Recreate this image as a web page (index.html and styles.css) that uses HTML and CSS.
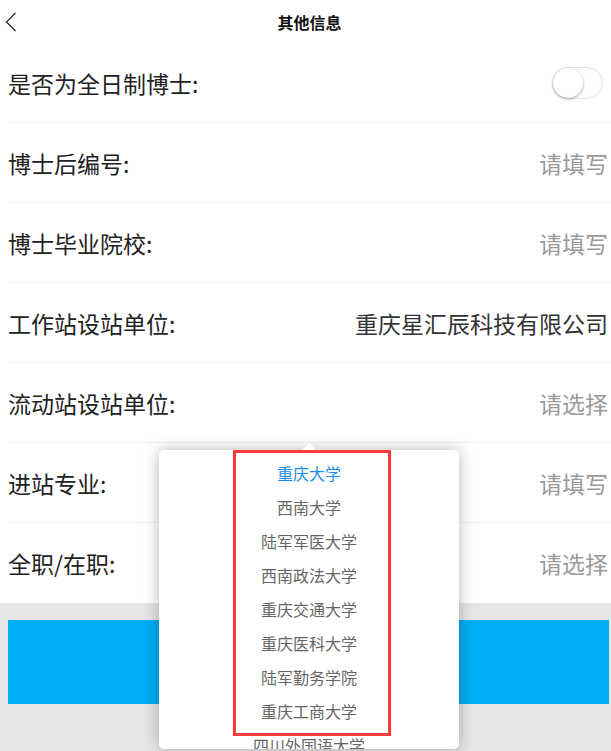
FILE: index.html
```html
<!DOCTYPE html>
<html lang="zh-CN">
    <head>
        <meta charset="utf-8">
        <title>其他信息</title>
        <meta name="viewport" content="width=device-width, initial-scale=1">
        <link rel="stylesheet" href="styles.css">
    </head>

    <body>
        <header class="navbar">
            <span class="back">
                <svg width="12" height="20" viewBox="0 0 12 20"><path d="M10.5 1 L1.5 10 L10.5 19" fill="none" stroke="#333" stroke-width="1.4"/></svg>
            </span>
            <h1 class="title">其他信息</h1>
        </header>

        <div class="form">
            <div class="row">
                <span class="label">是否为全日制博士:</span>
                <span class="switch"><span class="knob"></span></span>
            </div>
            <div class="row">
                <span class="label">博士后编号:</span>
                <span class="value placeholder">请填写</span>
            </div>
            <div class="row">
                <span class="label">博士毕业院校:</span>
                <span class="value placeholder">请填写</span>
            </div>
            <div class="row">
                <span class="label">工作站设站单位:</span>
                <span class="value">重庆星汇辰科技有限公司</span>
            </div>
            <div class="row">
                <span class="label">流动站设站单位:</span>
                <span class="value placeholder">请选择</span>
            </div>
            <div class="row">
                <span class="label">进站专业:</span>
                <span class="value placeholder">请填写</span>
            </div>
            <div class="row last">
                <span class="label">全职/在职:</span>
                <span class="value placeholder">请选择</span>
            </div>
        </div>

        <div class="footer">
            <button class="submit"></button>
        </div>

        <!-- school picker popover -->
        <div class="popover">
            <span class="arrow"></span>
            <ul class="options">
                <li class="active">重庆大学</li>
                <li>西南大学</li>
                <li>陆军军医大学</li>
                <li>西南政法大学</li>
                <li>重庆交通大学</li>
                <li>重庆医科大学</li>
                <li>陆军勤务学院</li>
                <li>重庆工商大学</li>
                <li>四川外国语大学</li>
            </ul>
            <div class="highlight"></div>
        </div>
    </body>
</html>
```

FILE: styles.css
```css
body {
    margin: 0;
    background-color: #fff;
    font-family: "Noto Sans CJK SC", "Noto Sans", sans-serif;
    color: #222;
    position: relative;
    overflow: hidden;
    height: 751px;
}

.navbar {
    height: 43px;
    display: flex;
    align-items: center;
    justify-content: center;
    position: relative;
}

.back {
    position: absolute;
    left: 5px;
    top: 12px;
}

.title {
    margin: 0;
    font-size: 16px;
    font-weight: bold;
    color: #111;
    padding-left: 8px;
}

.form {
    padding-left: 8px;
}

.row {
    height: 79px;
    border-bottom: 1px solid #f0f0f0;
    display: flex;
    align-items: center;
    justify-content: space-between;
    padding-right: 3px;
}

.row.last {
    border-bottom: none;
    height: 80px;
}

.label {
    font-size: 23px;
    color: #222;
}

.value {
    font-size: 23px;
    color: #333;
}

.placeholder {
    color: #999;
}

.switch {
    width: 49px;
    height: 30px;
    border: 1px solid #e3e3e3;
    border-radius: 16px;
    background-color: #fdfdfd;
    margin-right: 5px;
    position: relative;
}

.knob {
    position: absolute;
    left: 0;
    top: 0;
    width: 30px;
    height: 30px;
    border-radius: 50%;
    background-color: #fff;
    box-shadow: 0 1px 3px rgba(0, 0, 0, 0.35);
}

.footer {
    height: 148px;
    background-color: #e6e6e6;
    padding: 17px 2px 0 8px;
    box-sizing: border-box;
}

.submit {
    display: block;
    width: 100%;
    height: 84px;
    border: none;
    background-color: #00aef5;
}

.popover {
    position: absolute;
    left: 159px;
    top: 450px;
    width: 300px;
    height: 299px;
    background-color: #fff;
    border-radius: 5px;
    box-shadow: 0 0 16px rgba(0, 0, 0, 0.28);
}

.arrow {
    position: absolute;
    left: 143px;
    top: -7px;
    width: 0;
    height: 0;
    border-left: 7px solid transparent;
    border-right: 7px solid transparent;
    border-bottom: 7px solid #fff;
}

.options {
    list-style: none;
    margin: 0;
    padding: 6px 0 0 0;
    height: 293px;
    overflow: hidden;
    border-radius: 0 0 5px 5px;
}

.options li {
    height: 34px;
    line-height: 34px;
    text-align: center;
    font-size: 16px;
    color: #666;
}

.options li.active {
    color: #1a8cf0;
}

.highlight {
    position: absolute;
    left: 74px;
    top: 0;
    width: 152px;
    height: 280px;
    border: 3px solid #ff3b3b;
}
```
